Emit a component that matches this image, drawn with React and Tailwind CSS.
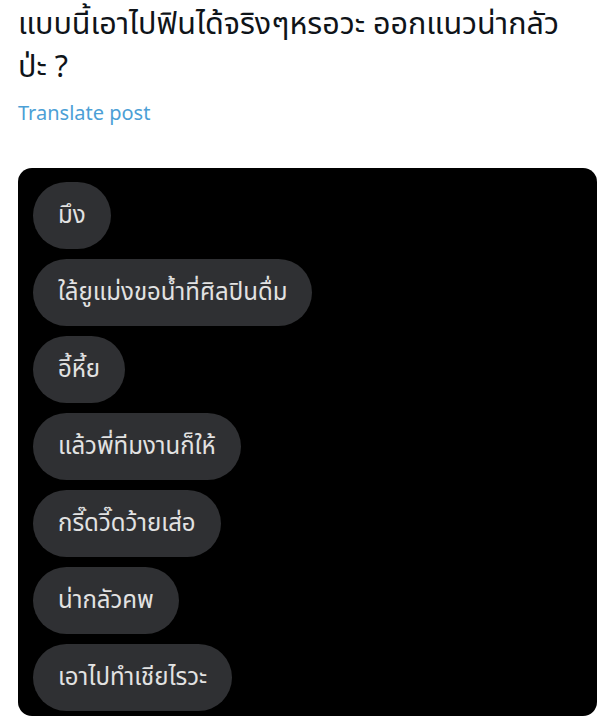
import React from 'react';

const messages = [
  'มึง',
  'ใล้ยูแม่งขอน้ำที่ศิลปินดื่ม',
  'อี้หี้ย',
  'แล้วพี่ทีมงานก็ให้',
  'กรี๊ดวี๊ดว้ายเส่อ',
  'น่ากลัวคพ',
  'เอาไปทำเชียไรวะ',
];

export default function App() {
  return (
    <div className="w-[610px] h-[728px] bg-white overflow-hidden font-['Noto_Sans_Thai','Noto_Sans','Liberation_Sans',sans-serif]">
      <div className="px-[18px] pt-[4px]">
        <p className="text-[30.5px] leading-[43px] text-[#0f1419]">
          แบบนี้เอาไปฟินได้จริงๆหรอวะ ออกแนวน่ากลัว
          <br />
          ป่ะ ?
        </p>
        <p className="mt-[11px] text-[20px] leading-[26px] text-[#4c9fd6]">Translate post</p>
      </div>

      <div className="ml-[18px] mr-[13px] mt-[41px] h-[548px] rounded-[14px] bg-black px-[15px] pt-[14px]">
        <div className="flex flex-col items-start gap-[10px]">
          {messages.map((m) => (
            <div
              key={m}
              className="h-[67px] flex items-center rounded-full bg-[#2f3033] px-[25px] text-[24px] text-[#e2e2e2]"
            >
              {m}
            </div>
          ))}
        </div>
      </div>
    </div>
  );
}
